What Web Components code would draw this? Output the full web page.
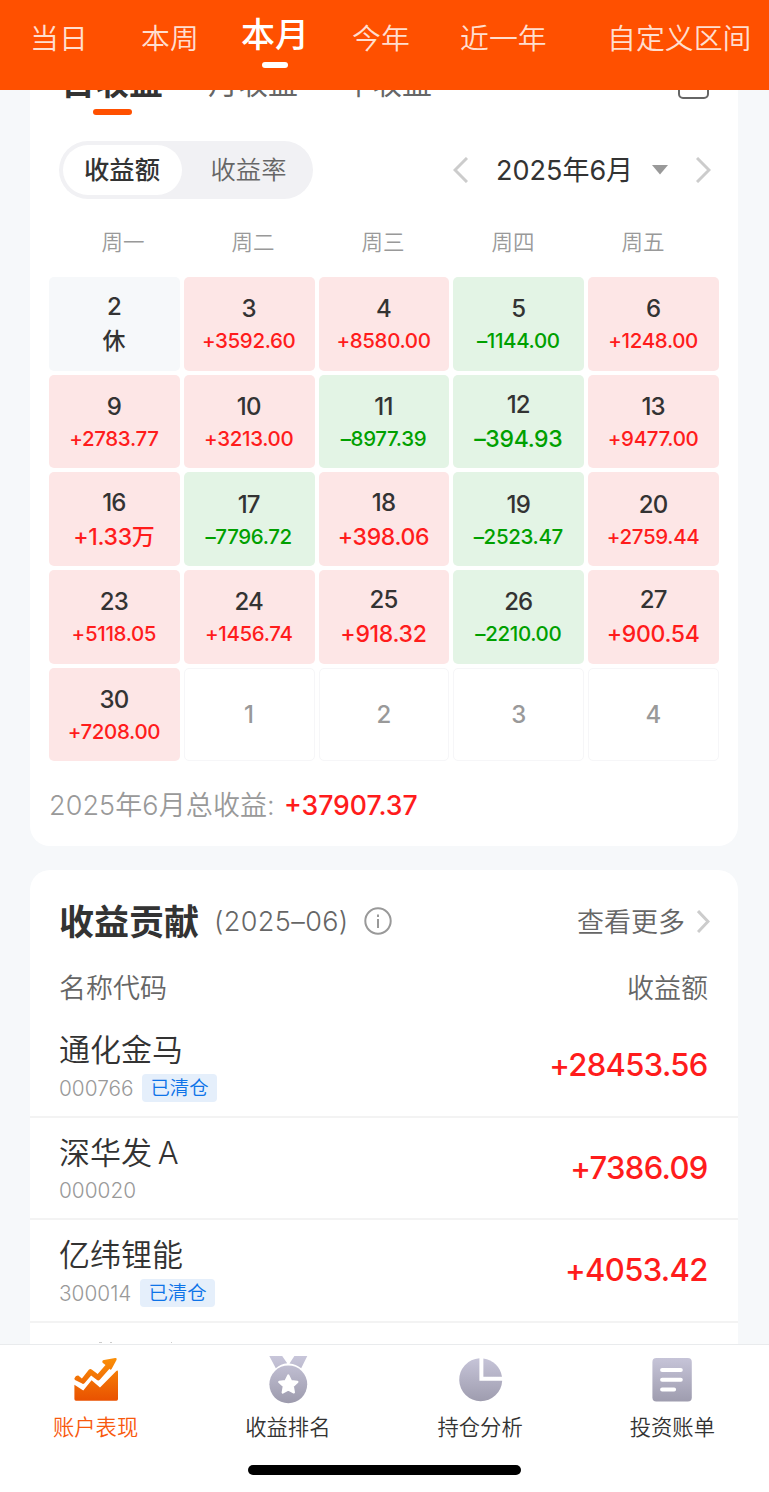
<!DOCTYPE html>
<html lang="zh-CN">
<head>
<meta charset="utf-8">
<title>账户表现</title>
<style>
html, body { margin: 0; height: 100%; overflow: hidden; }
body { font-family: Inter, "Noto Sans CJK SC", sans-serif; color: #333; background: #f6f7f9; }
</style>
</head>
<body>
<profit-app></profit-app>
<script>
const define = (name, html, setup) => {
  const tpl = document.createElement('template');
  tpl.innerHTML = '<style>*{box-sizing:border-box}:host{display:block;box-sizing:border-box;white-space:nowrap}</style>' + html;
  customElements.define(name, class extends HTMLElement {
    constructor() {
      super();
      this.attachShadow({ mode: 'open' }).append(tpl.content.cloneNode(true));
    }
    connectedCallback() { if (setup) setup(this, this.shadowRoot); }
  });
};

/* Range tabs in the orange header */
define('range-tabs', `
<style>
:host { height: 90px; background: #ff5000; position: relative; z-index: 2; flex: none; }
nav { display: grid; grid-template-columns: 111px 100px 111px 108px 147px auto; padding-left: 30px; height: 76px; align-items: center; }
span { font-weight: 350; font-size: 28.9px; line-height: 40px; color: rgba(255,255,255,.82); }
.on { font-size: 34px; font-weight: 500; color: #fff; justify-self: start; display: grid; justify-items: center; height: 60px; line-height: 53px; }
.on::after { content: ""; width: 26px; height: 6px; border-radius: 3px; background: #fff; }
span:not(.on) { padding-top: 1px; }
</style>
<nav><span>当日</span><span>本周</span><span class="on">本月</span><span>今年</span><span>近一年</span><span>自定义区间</span></nav>`);

define('icon-chevron', `
<style>svg { display: block; }</style>
<svg fill="none" stroke="#ccc" stroke-width="3"><path/></svg>`,
(el, r) => {
  const w = +el.getAttribute('w'), h = +el.getAttribute('h'), s = r.querySelector('svg');
  const left = el.hasAttribute('left');
  s.setAttribute('width', w); s.setAttribute('height', h);
  const a = left ? w - 1 : 1, b = left ? 2 : w - 2;
  s.firstElementChild.setAttribute('d', `M${a} 1L${b} ${h / 2}L${a} ${h - 1}`);
});

define('period-tabs', `
<style>
:host { height: 57px; display: grid; grid-template-columns: 147px 134px 1fr auto; padding: 0 29px 0 31px; }
span { font-size: 30px; line-height: 40px; padding-top: 3px; color: #666; }
.on { font-size: 34px; font-weight: 700; color: #333; width: 102px; display: grid; justify-items: center; align-content: start; }
.on::after { content: ""; width: 39px; height: 6px; border-radius: 3px; background: #ff5000; margin-top: 6px; }
svg { margin-top: 8px; }
</style>
<span class="on">日收益</span><span>月收益</span><span>年收益</span>
<svg width="31" height="32" fill="none" stroke="#666" stroke-width="2"><rect x="1" y="3" width="29" height="27" rx="4"/></svg>`);

define('mode-switch', `
<style>
:host { display: flex; width: 254px; height: 58px; border-radius: 29px; background: #f1f1f4; padding: 4px; font-size: 25.3px; color: #666; }
span { flex: 0 0 119px; border-radius: 25px; text-align: center; line-height: 49px; }
span + span { flex: 1; padding-left: 6px; font-weight: 350; }
.on { background: #fff; color: #333; font-weight: 500; padding-right: 1px; }
</style>
<span class="on">收益额</span><span>收益率</span>`);

define('month-picker', `
<style>
:host { display: flex; align-items: center; color: #333; }
b { font-weight: 400; font-size: 27px; line-height: 40px; width: 136px; margin: 1px 20px 0 28px; }
svg { margin-right: 28px; }
</style>
<icon-chevron left w="15" h="26"></icon-chevron><b>2025年6月</b>
<svg width="16" height="10"><path d="M0 0H16L8 9.5Z" fill="#999"/></svg>
<icon-chevron w="15" h="26"></icon-chevron>`);

define('week-header', `
<style>
:host { display: grid; grid-template-columns: repeat(5, 130px); padding: 0 28px; text-align: center; font-size: 21.5px; line-height: 32px; color: #999; font-weight: 350; }
</style>
<span>周一</span><span>周二</span><span>周三</span><span>周四</span><span>周五</span>`);

define('day-cell', `
<style>
:host { display: flex; flex-direction: column; align-items: center; justify-content: center; border-radius: 5px; background: #fde6e6; color: #ff1c1c; font-weight: 500; padding-top: 1px; }
:host([kind=down]) { background: #e3f4e5; color: #00a000; }
:host([kind=rest]) { background: #f6f8fa; color: #333; }
:host([kind=next]) { background: #fff; border: 1px solid #f6f6f8; }
b { font-weight: 500; font-size: 24px; line-height: 34px; color: #333; letter-spacing: -.8px; margin-left: -1px; }
:host([kind=next]) b { color: #999; }
i { font-style: normal; font-size: 20.5px; line-height: 30px; letter-spacing: -.35px; margin-left: -1px; }
i.big { font-size: 23px; line-height: 34px; letter-spacing: -.3px; }
i:empty { display: none; }
</style><b></b><i></i>`,
(el, r) => {
  const v = el.getAttribute('value') || '';
  r.querySelector('b').textContent = el.getAttribute('day');
  const i = r.querySelector('i');
  i.textContent = v;
  if (v.length < 8) i.className = 'big';
});

define('profit-calendar', `
<style>
:host { display: grid; grid-template-columns: repeat(5, 1fr); grid-auto-rows: 93.7px; gap: 4px; padding: 0 19px; }
</style>`,
(el, r) => {
  const days = [[2, '休'], [3, '+3592.60'], [4, '+8580.00'], [5, '–1144.00'], [6, '+1248.00'],
    [9, '+2783.77'], [10, '+3213.00'], [11, '–8977.39'], [12, '–394.93'], [13, '+9477.00'],
    [16, '+1.33万'], [17, '–7796.72'], [18, '+398.06'], [19, '–2523.47'], [20, '+2759.44'],
    [23, '+5118.05'], [24, '+1456.74'], [25, '+918.32'], [26, '–2210.00'], [27, '+900.54'],
    [30, '+7208.00'], [1, ''], [2, ''], [3, ''], [4, '']];
  for (const [day, value] of days) {
    const c = document.createElement('day-cell');
    c.setAttribute('day', day);
    c.setAttribute('value', value);
    c.setAttribute('kind', !value ? 'next' : value === '休' ? 'rest' : value[0] === '–' ? 'down' : 'up');
    r.append(c);
  }
});

define('calendar-card', `
<style>
:host { background: #fff; border-radius: 0 0 20px 20px; height: 786px; }
.bar { display: flex; justify-content: space-between; padding: 0 27px 0 29px; height: 58px; margin-top: 24px; }
week-header { margin: 27px 0 19px; }
footer { display: flex; padding-left: 19px; margin-top: 25px; font-size: 27px; line-height: 38px; color: #999; }
footer span { width: 235px; font-weight: 350; letter-spacing: .1px; padding-top: 1px; }
footer b { font-weight: 500; font-size: 26.6px; color: #ff1c1c; }
</style>
<period-tabs></period-tabs>
<div class="bar"><mode-switch></mode-switch><month-picker></month-picker></div>
<week-header></week-header>
<profit-calendar></profit-calendar>
<footer><span>2025年6月总收益:</span><b>+37907.37</b></footer>`);

define('stock-row', `
<style>
:host { display: flex; justify-content: space-between; height: 102.7px; padding: 0 30px 0 29px; border-bottom: 2px solid #f3f3f3; }
.name { font-size: 31px; line-height: 40px; margin-top: 15px; font-weight: 350; word-spacing: -3px; }
.meta { display: flex; align-items: center; height: 28px; margin-top: 4px; font-size: 20.8px; color: #999; font-weight: 350; gap: 9px; }
.tag { height: 28px; line-height: 28px; padding: 0 8px; border-radius: 4px; background: #e5effb; color: #0d73e8; font-size: 19.4px; }
.tag:empty { display: none; }
.val { font-size: 31px; font-weight: 500; line-height: 40px; margin-top: 30px; color: #ff1c1c; letter-spacing: -.65px; margin-right: .3px; }
</style>
<div><div class="name"><slot></slot></div><div class="meta"><span class="code"></span><span class="tag"></span></div></div>
<div class="val"></div>`,
(el, r) => {
  for (const k of ['code', 'tag', 'val']) r.querySelector('.' + k).textContent = el.getAttribute(k) || '';
});

define('contribution-card', `
<style>
:host { background: #fff; border-radius: 20px 20px 0 0; margin-top: 24px; height: 480px; }
header { display: flex; align-items: center; height: 102px; padding: 0 28px 0 29px; }
h2 { margin: -3px 0 0; font-size: 35px; font-weight: 700; width: 155px; }
.period { font-size: 27px; color: #666; font-weight: 350; width: 149.5px; letter-spacing: .4px; }
.more { margin: -2px 12px 0 auto; font-size: 27px; color: #666; font-weight: 350; }
.cols { display: flex; justify-content: space-between; padding: 0 30px 0 29px; font-size: 27px; line-height: 40px; margin: -3px 0 6px; color: #666; font-weight: 350; }
.cut { display: block; margin: 17px 0 0 69px; }
</style>
<header><h2>收益贡献</h2><span class="period">(2025–06)</span>
<svg width="28" height="28" fill="none" stroke="#999" stroke-width="2"><circle cx="14" cy="14" r="12.7"/><path d="M14 12v9M14 7.5v2.6"/></svg>
<span class="more">查看更多</span><icon-chevron w="13" h="23"></icon-chevron></header>
<div class="cols"><span>名称代码</span><span>收益额</span></div>
<stock-row code="000766" tag="已清仓" val="+28453.56">通化金马</stock-row>
<stock-row code="000020" val="+7386.09">深华发 A</stock-row>
<stock-row code="300014" tag="已清仓" val="+4053.42">亿纬锂能</stock-row>
<svg class="cut" width="80" height="3" fill="#ccc"><path d="M0 2h3v1H0zM11 2h2v1h-2zM72 2h1v1h-1z"/></svg>`);

const icons = {
  chart: `<path d="M2.4 28.8 11.3 34.6 19.6 24.2 28 31.6 44.3 15Q46 13.8 46 16V43Q46 44.7 44.4 44.7H4Q2.4 44.7 2.4 43Z"/><path d="M2.3 22.8Q3.5 19.2 6.3 19.4L9.9 22.6 16.8 13.8Q18.3 12.3 20 13.7L25.7 18 33.5 9 30.6 6.7Q29.6 4.4 32 3.9L43.2 2.1Q45.4 1.9 44.5 4L39.6 13.1Q38.4 14.4 37.5 12.7L28 23.5Q26.4 25.2 24.7 23.8L19.1 19.6 12.7 27Q11 28.7 9.2 27.1L3 23.9Z"/>`,
  medal: `<path d="M5.3 0H18.2L23.2 7.3Q17 8 11.8 12.3ZM30.4 0H43.3L37.2 12.3Q32 8.3 25.5 7.6Z"/><circle cx="24.3" cy="28.3" r="18.9"/><path d="M24.3 19.4 27 25 33.4 25.9 28.8 30.3 29.9 36.5 24.3 33.5 18.7 36.5 19.8 30.3 15.2 25.9 21.6 25Z" fill="#fff" stroke="#fff" stroke-width="2.2" stroke-linejoin="round"/>`,
  pie: `<path d="M22.4 2.2A21.5 21.5 0 1 0 45.2 24.7H22.4Z"/><path d="M26.4 2.4A21.5 21.5 0 0 1 45 20.7H26.4Z"/>`,
  bill: `<rect x="3.4" y="2" width="39.4" height="43.6" rx="4"/><path d="M13.1 14H31.8M13.1 23.7H31.8M13.1 33.5H25.1" stroke="#fff" stroke-width="4" stroke-linecap="round"/>`
};

define('nav-item', `
<style>
:host { display: flex; flex-direction: column; align-items: center; padding-top: 11px; font-size: 21.3px; line-height: 32px; color: #333; font-weight: 350; }
:host([active]) { color: #f8590d; }
span { margin: 7px 1px 0 0; }
</style>
<svg width="48" height="48"><defs><linearGradient id="g" x1="0" y1="0" x2="0" y2="48" gradientUnits="userSpaceOnUse"><stop offset="0" stop-color="#c8c6da"/><stop offset="1" stop-color="#9c9aac"/></linearGradient></defs><g fill="url(#g)"></g></svg>
<span><slot></slot></span>`,
(el, r) => {
  if (el.hasAttribute('active')) {
    const s = r.querySelectorAll('stop');
    s[0].setAttribute('stop-color', '#fb9208');
    s[1].setAttribute('stop-color', '#e84c00');
  }
  r.querySelector('g').innerHTML = icons[el.getAttribute('icon')];
});

define('bottom-nav', `
<style>
:host { height: 148px; flex: none; background: #fff; border-top: 1px solid #e9ebed; position: relative; z-index: 2; }
nav { display: grid; grid-template-columns: repeat(4, 1fr); height: 120px; }
.home { width: 273px; height: 10px; border-radius: 5px; background: #000; margin: 0 auto; }
</style>
<nav><nav-item icon="chart" active>账户表现</nav-item><nav-item icon="medal">收益排名</nav-item><nav-item icon="pie">持仓分析</nav-item><nav-item icon="bill">投资账单</nav-item></nav>
<div class="home"></div>`);

define('profit-app', `
<style>
:host { display: flex; flex-direction: column; width: 769px; height: 1492px; overflow: hidden; background: #f6f8fa; }
main { flex: 1; min-height: 0; overflow: hidden; margin-top: -30px; padding: 0 31px 0 30px; }
</style>
<range-tabs></range-tabs>
<main><calendar-card></calendar-card><contribution-card></contribution-card></main>
<bottom-nav></bottom-nav>`);
</script>
</body>
</html>
